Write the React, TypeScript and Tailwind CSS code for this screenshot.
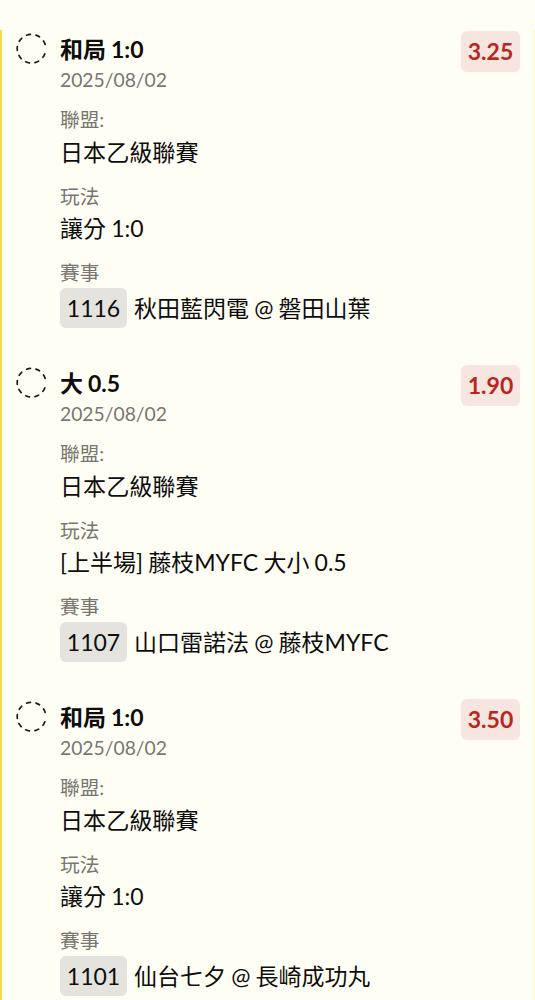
const items = [
  { pick: "和局 1:0", odds: "3.25", play: "讓分 1:0", no: "1116", match: "秋田藍閃電 @ 磐田山葉" },
  { pick: "大 0.5", odds: "1.90", play: "[上半場] 藤枝MYFC 大小 0.5", no: "1107", match: "山口雷諾法 @ 藤枝MYFC" },
  { pick: "和局 1:0", odds: "3.50", play: "讓分 1:0", no: "1101", match: "仙台七夕 @ 長崎成功丸" },
];

const dashAngles = [-25, 29, 68, 106, 144, 181, 219, 258, 296];

function Bet({ pick, odds, play, no, match }: (typeof items)[number]) {
  return (
    <article className="flex h-[334px] shrink-0 items-start pr-[14px] pl-[13px]">
      <svg className="mt-[2px] h-[33px] w-[33px] shrink-0" viewBox="0 0 33 33" fill="none" stroke="#1c1a18" strokeWidth="1.7" strokeLinecap="round">
        {dashAngles.map((angle) => (
          <path key={angle} d="M30.68 14.75a14.3 14.3 0 0 1 0 3.9" transform={`rotate(${angle} 16.5 16.7)`} />
        ))}
      </svg>
      <div className="ml-[12px] min-w-0 flex-1 whitespace-nowrap [word-spacing:-0.7px]">
        <h2 className="h-[35px] pt-[3px] text-[23px] leading-[32px] font-bold">{pick}</h2>
        <p className="h-[39px] text-[19.3px] leading-[30px] text-[#777670]">2025/08/02</p>
        <p className="h-[31px] text-[19.7px] leading-[32px] text-[#777670]">聯盟:</p>
        <p className="h-[46px] text-[23.1px] leading-[34px]">日本乙級聯賽</p>
        <p className="h-[31px] text-[19.7px] leading-[32px] text-[#777670]">玩法</p>
        <p className="h-[45px] text-[23px] leading-[32px]">{play}</p>
        <p className="h-[31px] text-[19.7px] leading-[32px] text-[#777670]">賽事</p>
        <p className="flex items-center text-[23px] leading-[40px]">
          <span className="mr-[7px] flex h-10 w-[67px] items-center justify-center rounded-[6px] bg-[#e5e3de]">{no}</span>
          {match}
        </p>
      </div>
      <strong className="mt-px flex h-[41px] w-[59px] shrink-0 items-center justify-center rounded-[6px] bg-[#f7e5df] text-[23px] text-[#b92620]">{odds}</strong>
    </article>
  );
}

export default function App() {
  return (
    <main className="h-[1000px] overflow-hidden bg-[#fffef4] pt-[30px] font-[Lato,'Noto_Sans_CJK_TC',sans-serif] text-[#0d0d0d]">
      <div className="flex h-[970px] flex-col overflow-hidden border-r border-l-2 border-r-[#fff7c8] border-l-[#f7db4b]">
        {items.map((item) => <Bet key={item.no} {...item} />)}
      </div>
    </main>
  );
}
